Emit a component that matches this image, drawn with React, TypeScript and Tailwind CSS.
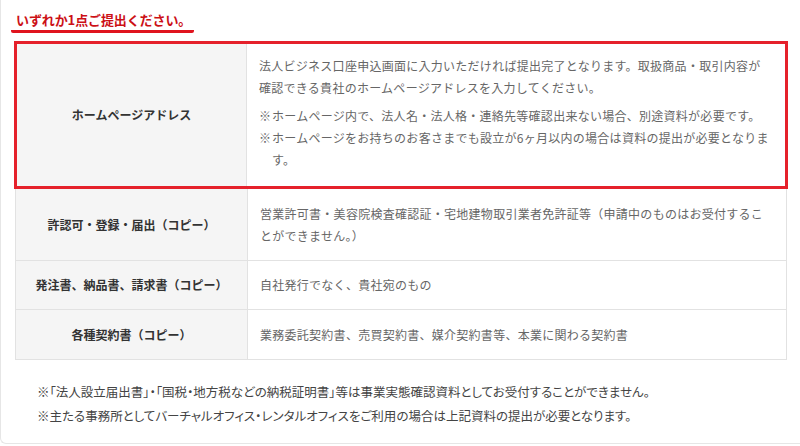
const rows = [
  {
    head: '許認可・登録・届出（コピー）',
    body: '営業許可書・美容院検査確認証・宅地建物取引業者免許証等（申請中のものはお受付することができません。）',
    h: 'h-[72px]',
  },
  { head: '発注書、納品書、請求書（コピー）', body: '自社発行でなく、貴社宛のもの', h: 'h-[49px]' },
  { head: '各種契約書（コピー）', body: '業務委託契約書、売買契約書、媒介契約書等、本業に関わる契約書', h: 'h-[50px]' },
];

function Note({ children }: { children: React.ReactNode }) {
  return (
    <div className="flex">
      <span className="w-[13px] shrink-0">※</span>
      <p>{children}</p>
    </div>
  );
}

export default function App() {
  return (
    <div
      className="w-[800px] h-[446px] bg-white overflow-hidden"
      style={{ fontFamily: '"Noto Sans CJK JP", "Noto Sans", sans-serif' }}
    >
      <div className="w-[830px] h-[444px] border-l border-b border-[#e6e6e6] rounded-bl-[6px] pl-[13px] pt-[6px]">
        {/* Title */}
        <div className="inline-block ml-[-3px] px-[3px] pb-[2px] border-b-[3px] border-[#e0141e] rounded-[2px]">
          <p className="pl-[2px] text-[13px] leading-[17px] font-bold text-[#cc1016] tracking-[-0.1px]">
            いずれか1点ご提出ください。
          </p>
        </div>

        {/* Table */}
        <div className="w-[774px] mt-[8px] text-[12px]">
          <div className="flex h-[148px] border-[3px] border-[#e5212b]">
            <div className="w-[230px] shrink-0 bg-[#f5f5f5] border-r border-[#e2e2e2] flex items-center justify-center font-bold text-[#333]">
              ホームページアドレス
            </div>
            <div className="flex-1 pl-[12px] pr-[13px] pt-[11px] text-[#666] leading-[22px] tracking-[0.27px]">
              <p>法人ビジネス口座申込画面に入力いただければ提出完了となります。取扱商品・取引内容が確認できる貴社のホームページアドレスを入力してください。</p>
              <div className="mt-[6px]">
                <Note>ホームページ内で、法人名・法人格・連絡先等確認出来ない場合、別途資料が必要です。</Note>
                <Note>ホームページをお持ちのお客さまでも設立が6ヶ月以内の場合は資料の提出が必要となります。</Note>
              </div>
            </div>
          </div>
          {rows.map((r) => (
            <div key={r.head} className={`flex mx-[1px] border-x border-b border-[#e2e2e2] ${r.h}`}>
              <div className="w-[232px] shrink-0 bg-[#f5f5f5] border-r border-[#e2e2e2] flex items-center justify-center font-bold text-[#333]">
                {r.head}
              </div>
              <div className="flex-1 pl-[12px] pr-[16px] flex items-center text-[#666] leading-[22px] tracking-[0.27px]">
                <p>{r.body}</p>
              </div>
            </div>
          ))}
        </div>

        {/* Notes */}
        <div className="mt-[20px] pl-[23px] text-[12.5px] leading-[24px] text-[#444] [font-feature-settings:'palt']">
          <p>※「法人設立届出書」・「国税・地方税などの納税証明書」等は事業実態確認資料としてお受付することができません。</p>
          <p>※主たる事務所としてバーチャルオフィス・レンタルオフィスをご利用の場合は上記資料の提出が必要となります。</p>
        </div>
      </div>
    </div>
  );
}
